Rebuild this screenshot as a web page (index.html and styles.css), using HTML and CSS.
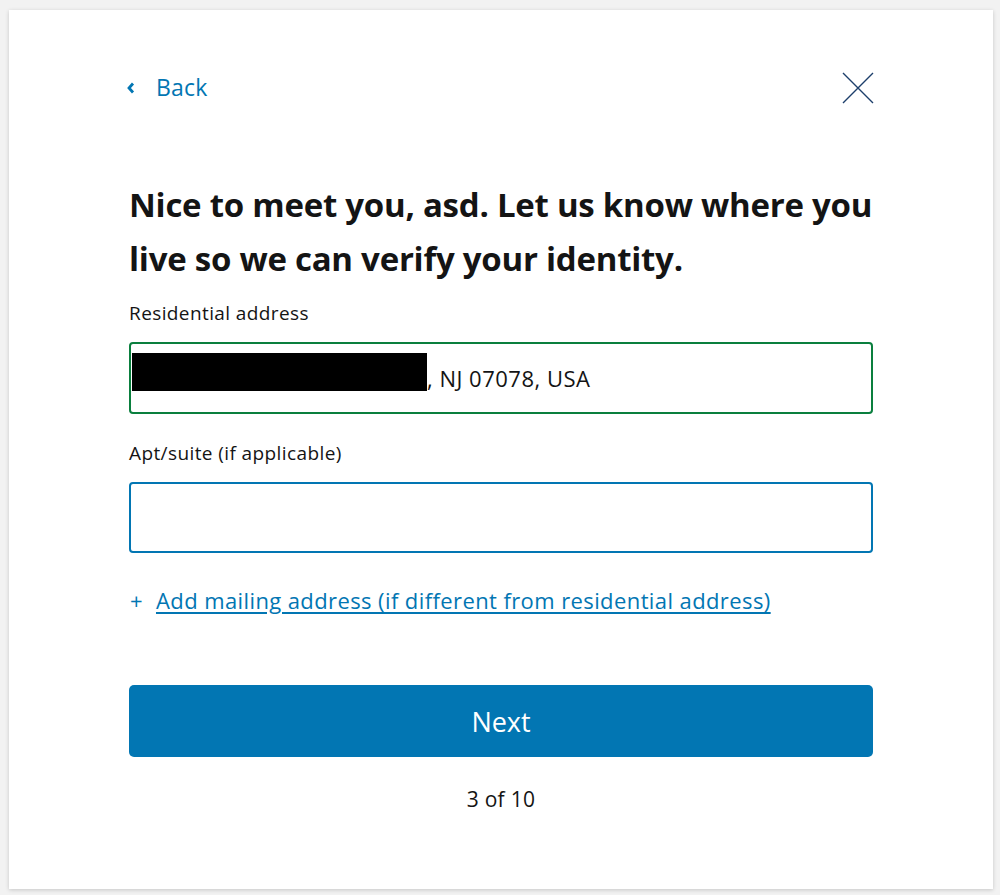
FILE: index.html
```html
<!DOCTYPE html>
<html lang="en">
<head>
<meta charset="utf-8">
<title>Address</title>
<link rel="stylesheet" href="styles.css">
</head>
<body>
<main class="card">
  <div class="topbar">
    <a class="back" href="#">
      <svg class="chev" width="8" height="12" viewBox="0 0 8 12"><path d="M6 1.5 L2 6 L6 10.5" fill="none" stroke="#0276b3" stroke-width="2.8"/></svg>
      <span>Back</span>
    </a>
    <button class="close" aria-label="Close">
      <svg width="32" height="32" viewBox="0 0 32 32"><path d="M1 1 L31 31 M31 1 L1 31" stroke="#1d3f6b" stroke-width="1.4" fill="none"/></svg>
    </button>
  </div>
  <h1 class="title">Nice to meet you, asd. Let us know where you live so we can verify your identity.</h1>
  <label class="label">Residential address</label>
  <div class="field field-ok"><span class="redact"></span><span class="val">, NJ 07078, USA</span></div>
  <label class="label label2">Apt/suite (if applicable)</label>
  <div class="field field-focus"></div>
  <div class="addlink"><span class="plus">+</span><a href="#">Add mailing address (if different from residential address)</a></div>
  <button class="next">Next</button>
  <div class="step">3 of 10</div>
</main>
</body>
</html>
```
FILE: styles.css
```css
html, body { margin: 0; padding: 0; }
body {
  background: #f2f2f2;
  font-family: "Open Sans", "Noto Sans", sans-serif;
  color: #141414;
  padding: 10px 7px 6px 9px;
}
.card {
  background: #fff;
  width: 984px;
  height: 879px;
  box-sizing: border-box;
  padding: 62px 120px 0 120px;
  box-shadow: 0 1px 4px rgba(0,0,0,0.18);
}
.topbar {
  display: flex;
  justify-content: space-between;
  align-items: center;
  height: 32px;
}
.back {
  display: flex;
  align-items: center;
  gap: 21px;
  color: #0276b3;
  text-decoration: none;
  font-size: 23px;
  letter-spacing: 0.2px;
  margin-left: -2px;
}
.back span { margin-top: -2px; }
.chev { display: block; }
.close {
  background: none;
  border: 0;
  padding: 0;
  width: 32px;
  height: 32px;
  margin-right: -1px;
}
.close svg { display: block; }
.title {
  font-size: 33px;
  font-weight: 700;
  line-height: 54px;
  margin: 74px 0 0 0;
  letter-spacing: -0.25px;
}
.label {
  display: block;
  font-size: 19px;
  letter-spacing: 0.4px;
  line-height: 24px;
  margin-top: 15px;
}
.label2 { margin-top: 27px; }
.field {
  box-sizing: border-box;
  border-radius: 4px;
  margin-top: 17px;
  display: flex;
  align-items: center;
  padding-left: 1px;
  font-size: 22px;
  letter-spacing: 0.5px;
}
.field-ok { border: 2px solid #0a7f3e; height: 72px; }
.field-focus { border: 2px solid #0276b3; height: 71px; }
.redact {
  display: inline-block;
  width: 295px;
  height: 38px;
  background: #000;
  align-self: flex-start;
  margin-top: 9px;
}
.addlink {
  margin-top: 32px;
  font-size: 22px;
  letter-spacing: 0.4px;
  color: #0276b3;
  display: flex;
  gap: 13px;
  align-items: baseline;
}
.addlink a { color: #0276b3; text-decoration: underline; text-underline-offset: 3px; }
.plus { padding-left: 1px; }
.next {
  display: block;
  width: 100%;
  height: 72px;
  margin-top: 70px;
  background: #0276b3;
  border: 0;
  border-radius: 5px;
  color: #fff;
  font-family: inherit;
  font-size: 27px;
}
.step {
  text-align: center;
  font-size: 21px;
  letter-spacing: 0.3px;
  margin-top: 28px;
}
```
